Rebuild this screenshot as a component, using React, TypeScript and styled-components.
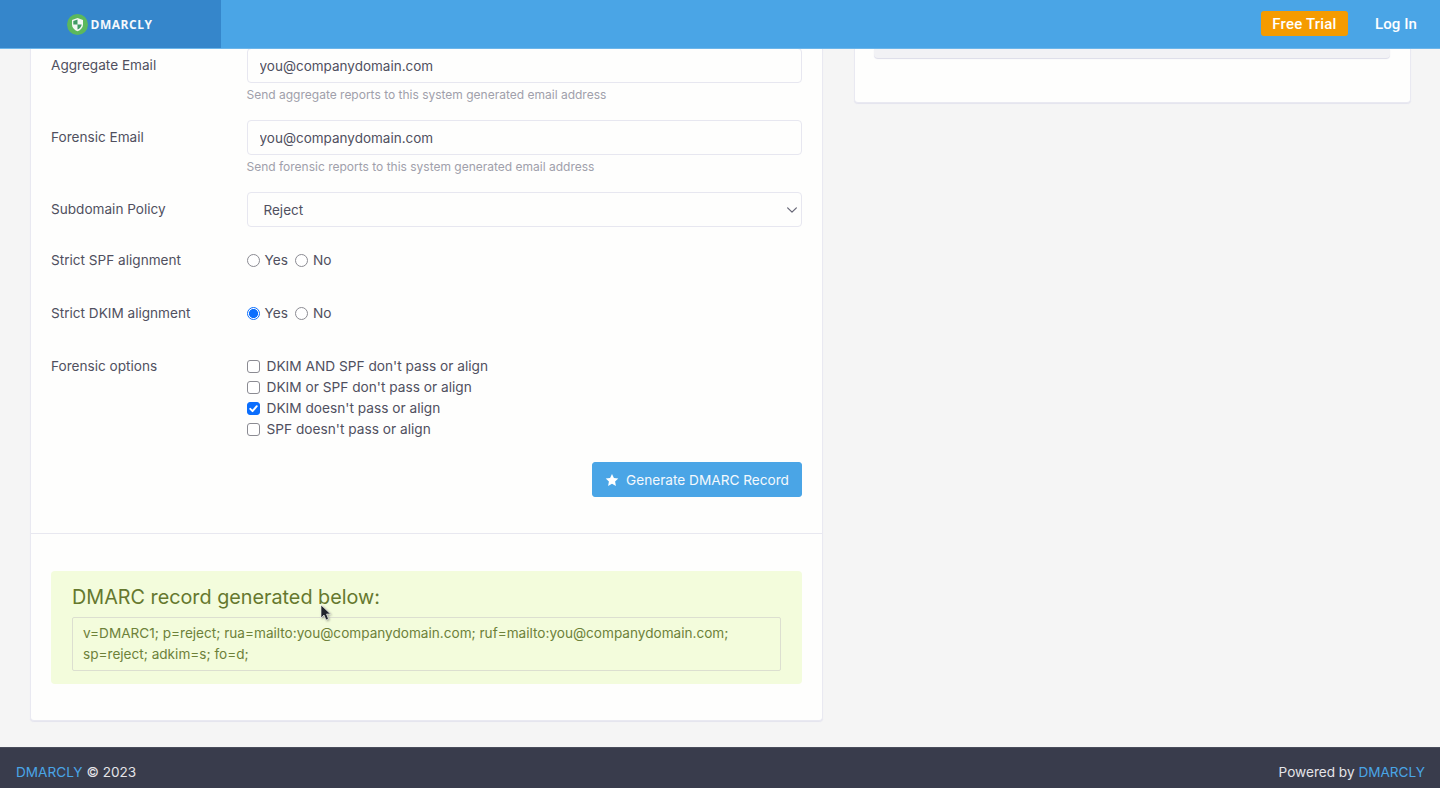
import React from 'react';
import styled, { createGlobalStyle } from 'styled-components';

const GlobalStyle = createGlobalStyle`
  html, body {
    margin: 0;
    padding: 0;
    height: 100%;
    overflow: hidden;
  }
  body {
    background: #f5f5f5;
    font-family: 'Inter', 'Liberation Sans', sans-serif;
    color: #50505f;
  }
  * {
    box-sizing: border-box;
  }
`;

const checkIcon = `url("data:image/svg+xml,%3Csvg xmlns='http://www.w3.org/2000/svg' viewBox='0 0 20 20'%3E%3Cpath fill='none' stroke='%23fff' stroke-linecap='round' stroke-linejoin='round' stroke-width='3' d='M5 10.5l3.5 3.5 6.5-7.5'/%3E%3C/svg%3E")`;
const chevronIcon = `url("data:image/svg+xml,%3Csvg xmlns='http://www.w3.org/2000/svg' viewBox='0 0 16 16'%3E%3Cpath fill='none' stroke='%23666676' stroke-linecap='round' stroke-linejoin='round' stroke-width='1.4' d='M3 5.5l5 5 5-5'/%3E%3C/svg%3E")`;

const Page = styled.div`
  position: relative;
  height: 788px;
  display: flex;
  flex-direction: column;
  overflow: hidden;
`;

const TopBar = styled.header`
  height: 49px;
  flex: none;
  display: flex;
  align-items: stretch;
  justify-content: space-between;
  background: #4aa5e6;
  border-bottom: 1px solid #6db6ea;
  position: relative;
  z-index: 2;
`;

const Brand = styled.div`
  width: 221px;
  display: flex;
  align-items: center;
  justify-content: center;
  gap: 3px;
  background: #3586cb;
  padding-right: 2px;
`;

const BrandName = styled.span`
  font-family: 'Open Sans', 'Liberation Sans', sans-serif;
  font-size: 12px;
  font-weight: 700;
  letter-spacing: 0.5px;
  color: #f4f8fc;
`;

const Nav = styled.nav`
  display: flex;
  align-items: center;
  padding-right: 23px;
  gap: 27px;
`;

const TrialButton = styled.a`
  width: 87px;
  height: 25px;
  margin-top: -1px;
  display: flex;
  align-items: center;
  justify-content: center;
  border-radius: 3px;
  background: #f59b00;
  color: #fff;
  font-family: 'Roboto', sans-serif;
  font-size: 15px;
  font-weight: 500;
  letter-spacing: 0.2px;
`;

const LoginLink = styled.a`
  color: #fff;
  font-family: 'Roboto', sans-serif;
  font-size: 15px;
  font-weight: 500;
  letter-spacing: 0.1px;
`;

const Main = styled.main`
  flex: none;
  height: 698px;
  display: grid;
  grid-template-columns: 793px 557px;
  column-gap: 31px;
  padding-left: 30px;
  align-items: start;
`;

const Card = styled.section`
  background: #fefefd;
  border: 1px solid #e9e9f1;
  border-top: 0;
  border-radius: 0 0 4px 4px;
  box-shadow: 0 1px 1px #e4e4ee;
`;

const FormBody = styled.div`
  padding: 0 20px 36px 20px;
  margin-top: -1px;
  border-bottom: 1px solid #e8e8f0;
`;

const FormRow = styled.div<{ $height: number }>`
  display: grid;
  grid-template-columns: 195.5px 1fr;
  height: ${p => p.$height}px;
`;

const Label = styled.label`
  font-size: 13.6px;
  line-height: 20px;
  padding-top: 7px;
  color: #50505f;
`;

const TextInput = styled.input`
  display: block;
  width: 100%;
  height: 35px;
  padding: 0 12px;
  border: 1px solid #e7e7f0;
  border-radius: 4px;
  background: #fefefd;
  font: 13.5px 'Inter', sans-serif;
  color: #50505f;
  outline: none;
`;

const Help = styled.div`
  margin-top: 4px;
  font-size: 12px;
  line-height: 15px;
  color: #a0a0ab;
`;

const SelectInput = styled.select`
  display: block;
  width: 100%;
  height: 35px;
  padding: 0 16px;
  border: 1px solid #e7e7f0;
  border-radius: 4px;
  appearance: none;
  background: #fefefd ${chevronIcon} no-repeat right 2px center / 14px;
  font: 13.5px 'Inter', sans-serif;
  color: #50505f;
  outline: none;
`;

const RadioGroup = styled.div`
  display: flex;
  align-items: flex-start;
  gap: 7px;
  padding-top: 7px;
`;

const Choice = styled.label<{ $gap: number }>`
  display: flex;
  align-items: center;
  gap: ${p => p.$gap}px;
  font-size: 13.7px;
  line-height: 21px;
  color: #50505f;
`;

const Radio = styled.input.attrs({ type: 'radio' })`
  appearance: none;
  width: 13px;
  height: 13px;
  margin: 0;
  border: 1px solid #8b8b92;
  border-radius: 50%;
  background: #fff;

  &:checked {
    border: 1px solid #0b6efd;
    background: radial-gradient(circle, #0b6efd 0 4.2px, #fff 4.9px);
  }
`;

const CheckList = styled.div`
  display: flex;
  flex-direction: column;
  padding-top: 7px;
`;

const Checkbox = styled.input.attrs({ type: 'checkbox' })`
  appearance: none;
  width: 13px;
  height: 13px;
  margin: 0;
  border: 1px solid #8b8b92;
  border-radius: 3px;
  background: #fff;

  &:checked {
    border-color: #0b6efd;
    background: #0b6efd ${checkIcon} no-repeat center / 13px;
  }
`;

const Actions = styled.div`
  display: flex;
  justify-content: flex-end;
`;

const GenerateButton = styled.button`
  width: 210px;
  height: 35px;
  display: flex;
  align-items: center;
  justify-content: center;
  gap: 7px;
  border: 1px solid #4aa5e6;
  border-radius: 3px;
  background: #4aa5e6;
  color: #f4f9fd;
  font: 13.65px 'Inter', sans-serif;
`;

const ResultArea = styled.div`
  padding: 37px 20px 36px 20px;
`;

const ResultBox = styled.div`
  height: 113px;
  padding: 12px 21px 0 21px;
  border-radius: 4px;
  background: #f3fcdc;
`;

const ResultTitle = styled.h2`
  margin: 0 0 6px;
  font-size: 19.8px;
  line-height: 28px;
  font-weight: 400;
  color: #65782e;
`;

const RecordText = styled.div`
  height: 54px;
  padding: 5px 10px;
  border: 1px solid #dcdfd0;
  border-radius: 2px;
  font-size: 13.6px;
  line-height: 21px;
  color: #6d8139;
`;

const SideCard = styled(Card)`
  height: 54px;
  padding: 0 20px 0 19px;
`;

const SideInner = styled.div`
  height: 9px;
  background: #f2f2f5;
  border-radius: 0 0 4px 4px;
  box-shadow: 0 1px 1px #dcdce8;
`;

const Footer = styled.footer`
  flex: none;
  height: 41px;
  display: flex;
  align-items: center;
  justify-content: space-between;
  padding: 7px 15px 0 16px;
  background: #393c4c;
  border-top: 1px solid #4a4d5c;
  font-size: 13.6px;
  color: #e4e4e8;
`;

const FooterLink = styled.a`
  color: #4aa5e6;
`;

const Pointer = styled.svg`
  position: absolute;
  left: 320px;
  top: 604px;
  z-index: 3;
  filter: drop-shadow(1px 1px 1px rgba(0, 0, 0, 0.35));
`;

const ShieldLogo = () => (
  <svg width="21" height="21" viewBox="0 0 21 21">
    <circle cx="10.5" cy="10.5" r="10.5" fill="#5cb85c" />
    <path d="M10.5 4l5.5 2v4.5c0 3.2-2.3 5.5-5.5 6.8C7.3 16 5 13.700 5 10.500V6z" fill="#f3f8f3" />
    <path d="M10.500 5.500v5H6.300V7zM10.500 10.500h4.200c-.2 2.300-1.900 4-4.200 5.100z" fill="#3f9a63" />
  </svg>
);

const StarIcon = () => (
  <svg width="14" height="14" viewBox="0 0 24 24" fill="#fff">
    <path d="M12 1.500l3.300 6.900 7.500 1-5.500 5.200 1.400 7.500L12 18.400l-6.700 3.700 1.400-7.500L1.200 9.400l7.500-1z" />
  </svg>
);

const forensicOptions = [
  { label: "DKIM AND SPF don't pass or align", checked: false },
  { label: "DKIM or SPF don't pass or align", checked: false },
  { label: "DKIM doesn't pass or align", checked: true },
  { label: "SPF doesn't pass or align", checked: false },
];

const App: React.FC = () => {
  return (
    <Page>
      <GlobalStyle />
      <TopBar>
        <Brand>
          <ShieldLogo />
          <BrandName>DMARCLY</BrandName>
        </Brand>
        <Nav>
          <TrialButton>Free Trial</TrialButton>
          <LoginLink>Log In</LoginLink>
        </Nav>
      </TopBar>
      <Main>
        <Card>
          <FormBody>
            <FormRow $height={72}>
              <Label>Aggregate Email</Label>
              <div>
                <TextInput defaultValue="you@companydomain.com" />
                <Help>Send aggregate reports to this system generated email address</Help>
              </div>
            </FormRow>
            <FormRow $height={72}>
              <Label>Forensic Email</Label>
              <div>
                <TextInput defaultValue="you@companydomain.com" />
                <Help>Send forensic reports to this system generated email address</Help>
              </div>
            </FormRow>
            <FormRow $height={51}>
              <Label>Subdomain Policy</Label>
              <SelectInput defaultValue="reject">
                <option value="reject">Reject</option>
              </SelectInput>
            </FormRow>
            <FormRow $height={53}>
              <Label>Strict SPF alignment</Label>
              <RadioGroup>
                <Choice $gap={5}><Radio name="spf" />Yes</Choice>
                <Choice $gap={5}><Radio name="spf" />No</Choice>
              </RadioGroup>
            </FormRow>
            <FormRow $height={53}>
              <Label>Strict DKIM alignment</Label>
              <RadioGroup>
                <Choice $gap={5}><Radio name="dkim" defaultChecked />Yes</Choice>
                <Choice $gap={5}><Radio name="dkim" />No</Choice>
              </RadioGroup>
            </FormRow>
            <FormRow $height={113}>
              <Label>Forensic options</Label>
              <CheckList>
                {forensicOptions.map(option => (
                  <Choice $gap={7} key={option.label}>
                    <Checkbox defaultChecked={option.checked} />
                    {option.label}
                  </Choice>
                ))}
              </CheckList>
            </FormRow>
            <Actions>
              <GenerateButton>
                <StarIcon />
                Generate DMARC Record
              </GenerateButton>
            </Actions>
          </FormBody>
          <ResultArea>
            <ResultBox>
              <ResultTitle>DMARC record generated below:</ResultTitle>
              <RecordText>
                v=DMARC1; p=reject; rua=mailto:you@companydomain.com; ruf=mailto:you@companydomain.com; sp=reject; adkim=s; fo=d;
              </RecordText>
            </ResultBox>
          </ResultArea>
        </Card>
        <SideCard>
          <SideInner />
        </SideCard>
      </Main>
      <Footer>
        <span><FooterLink>DMARCLY</FooterLink> © 2023</span>
        <span>Powered by <FooterLink>DMARCLY</FooterLink></span>
      </Footer>
      <Pointer width="12" height="18" viewBox="0 0 12 18">
        <path d="M1 1v13l3-3 2 5 2.500-1-2-5h4z" fill="#20242c" stroke="#fff" strokeWidth="0.6" />
      </Pointer>
    </Page>
  );
};

export default App;
